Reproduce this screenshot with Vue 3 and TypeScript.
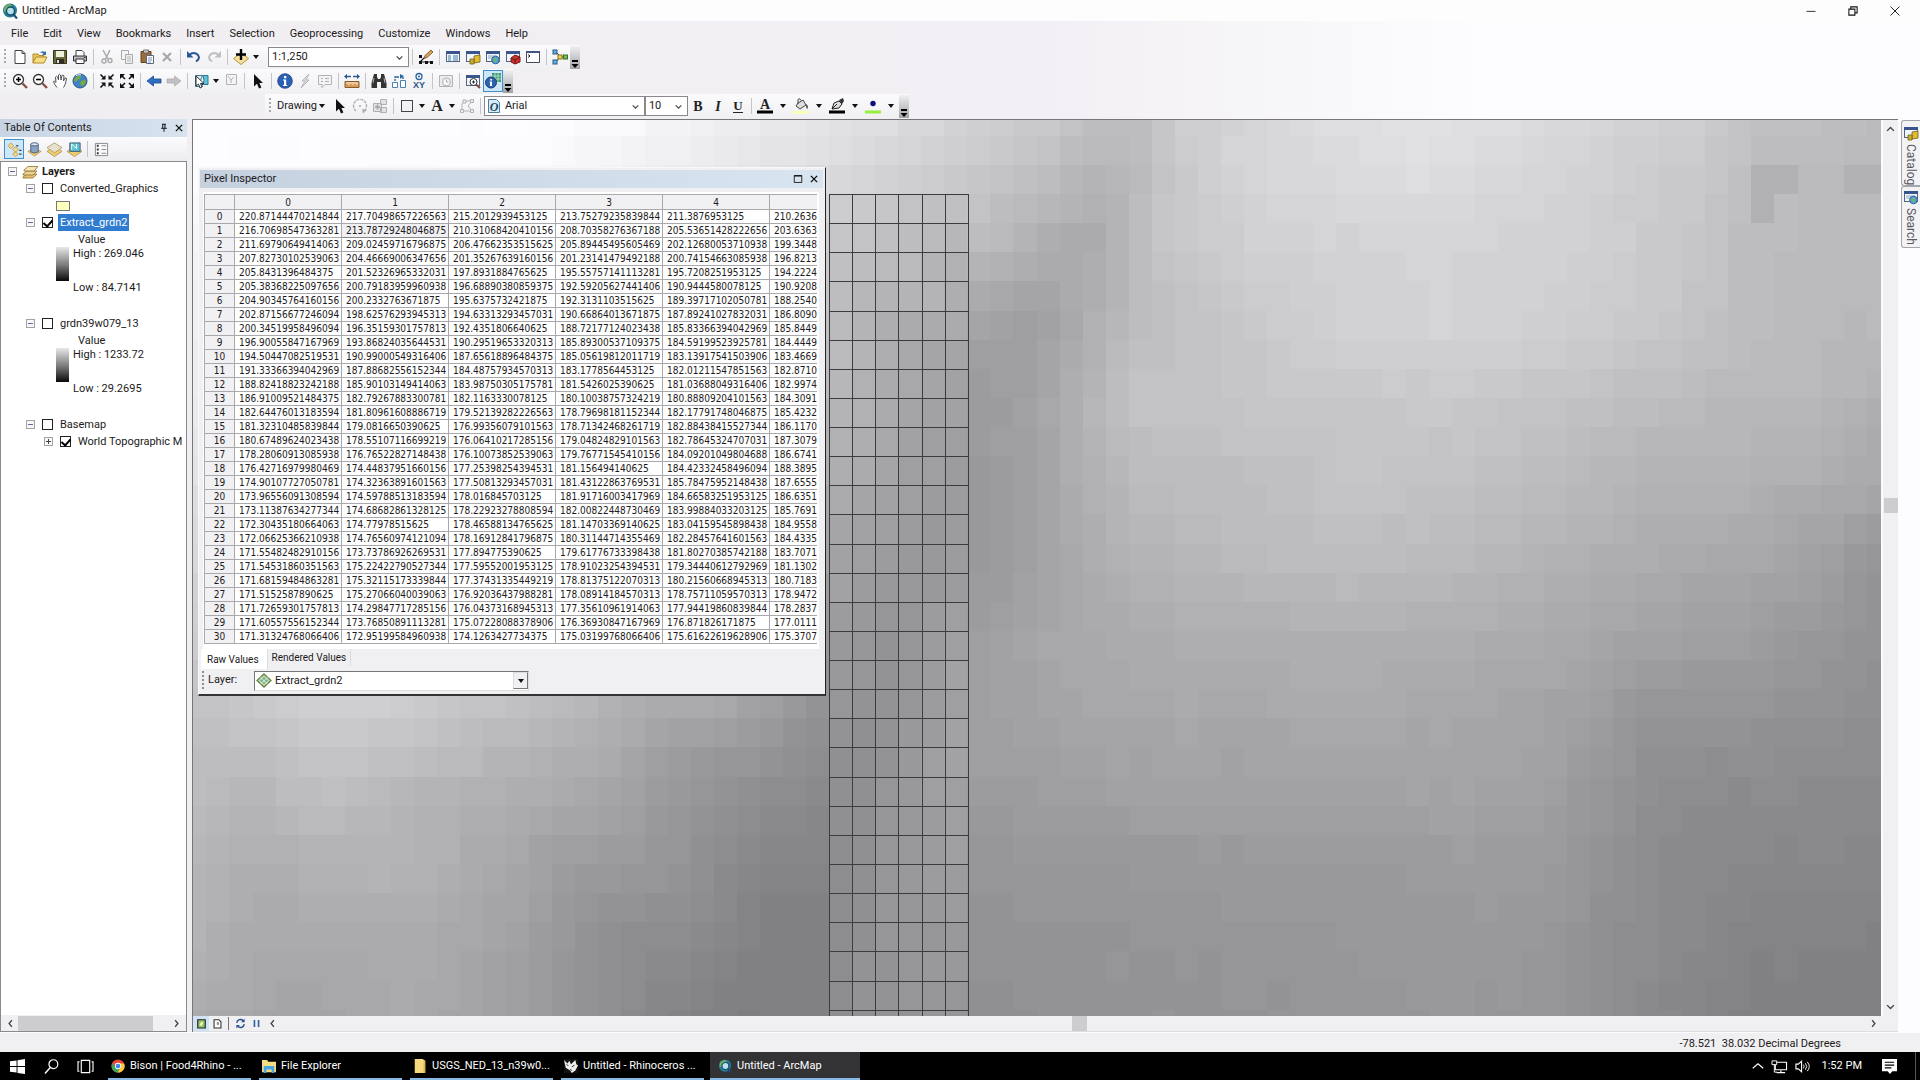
<script setup lang="ts">
import { ref } from 'vue'

type Item =
  | { kind: 'btn'; icon: string; label: string; active?: boolean }
  | { kind: 'sep' }
  | { kind: 'caret'; label: string; wide?: boolean }

const btn = (icon: string, label: string, active = false): Item => ({ kind: 'btn', icon, label, active })
const sep: Item = { kind: 'sep' }
const caret = (label: string, wide = false): Item => ({ kind: 'caret', label, wide })

const menus = ['File', 'Edit', 'View', 'Bookmarks', 'Insert', 'Selection', 'Geoprocessing', 'Customize', 'Windows', 'Help']

const standardLeft: Item[] = [
  btn('new', 'New'), btn('open', 'Open'), btn('save', 'Save'), btn('print', 'Print'), sep,
  btn('cut', 'Cut'), btn('copy', 'Copy'), btn('paste', 'Paste'), btn('del', 'Delete'), sep,
  btn('undo', 'Undo'), btn('redo', 'Redo'), sep,
  btn('add', 'Add data'), caret('Add data options'),
]
const standardRight: Item[] = [
  sep, btn('editor', 'Editor toolbar'), sep,
  btn('winToc', 'Table of contents'), btn('winCat', 'Catalog window'), btn('winSearch', 'Search window'),
  btn('winBox', 'ArcToolbox'), btn('winPy', 'Python window'), sep, btn('model', 'ModelBuilder'),
]
const tools: Item[] = [
  btn('zoomIn', 'Zoom in'), btn('zoomOut', 'Zoom out'), btn('pan', 'Pan'), btn('globe', 'Full extent'), sep,
  btn('fixIn', 'Fixed zoom in'), btn('fixOut', 'Fixed zoom out'), sep,
  btn('back', 'Previous extent'), btn('fwd', 'Next extent'), sep,
  btn('select', 'Select features'), caret('Select options'), btn('clear', 'Clear selection'), sep,
  btn('arrow', 'Select elements'), sep,
  btn('info', 'Identify'), btn('bolt', 'Hyperlink'), btn('html', 'HTML popup'), sep,
  btn('measure', 'Measure'), sep,
  btn('find', 'Find'), btn('route', 'Find route'), btn('xy', 'Go to XY'), sep,
  btn('time', 'Time slider'), sep,
  btn('viewer', 'Viewer window'), btn('pixel', 'Pixel inspector', true),
]
const drawLeft: Item[] = [
  btn('arrow', 'Select elements'), btn('rotate', 'Rotate'), btn('group', 'Group'), sep,
  btn('rect', 'Rectangle'), caret('Shapes'), btn('textA', 'Text'), caret('Text options'), btn('verts', 'Edit vertices'), sep,
]
const drawRight: Item[] = [
  btn('bold', 'Bold'), btn('italic', 'Italic'), btn('under', 'Underline'), sep,
  btn('fontCol', 'Font colour'), caret('Font colours', true),
  btn('fill', 'Fill colour'), caret('Fill colours', true),
  btn('pen', 'Line colour'), caret('Line colours', true),
  btn('dot', 'Marker colour'), caret('Marker colours', true),
]

const win = (inner: string) =>
  `<rect x="1.5" y="2.5" width="13" height="10" fill="#f2f6fa" stroke="#55647d"/><path d="M1 2h14v3H1z" fill="#39558c"/>${inner}`
const ser = 'font-family="Liberation Serif, serif" font-weight="bold"'

const icons: Record<string, string> = {
  new: '<path d="M3 1.500h7l3 3v10H3z" fill="#fff" stroke="#444"/><path d="M10 1.500v3h3" fill="none" stroke="#444"/>',
  open: '<path d="M1 14V5h5l1 1.500h5V9" fill="#e8c860" stroke="#b08a24"/><path d="M1 14l3-6h11l-3 6z" fill="#f7dd83" stroke="#b08a24"/><path d="M8 4q2-3 5-1l1-1v4h-4l1.500-1.500q-1.500-1-3-.5z" fill="#2f6fb0"/>',
  save: '<path d="M1.500 1.500h13v13h-13z" fill="#6d6a3c" stroke="#34331e"/><path d="M4 2h8v6H4z" fill="#f1f0da"/><path d="M4 10h8v4.500H4z" fill="#2e2d23"/><path d="M5 11h2v3H5z" fill="#ddd"/>',
  print: '<path d="M4 7V1.500h6l2 2V7" fill="#fff" stroke="#444"/><path d="M1.500 7h13v5h-13z" fill="#bbb9b9" stroke="#333"/><path d="M4 10h8v4.500H4z" fill="#fff" stroke="#333"/><path d="M12 8.500h1.500" stroke="#222"/>',
  cut: '<path d="M4 1l5 9M11 1L6.500 10" stroke="#aaa" stroke-width="1.500" fill="none"/><circle cx="5" cy="12" r="2" fill="none" stroke="#aaa" stroke-width="1.400"/><circle cx="11" cy="11.500" r="2" fill="none" stroke="#aaa" stroke-width="1.400"/>',
  copy: '<path d="M2.500 1.500h7v9h-7z" fill="#f4f4f4" stroke="#aaa"/><path d="M6.500 5.500h7v9h-7z" fill="#eee" stroke="#aaa"/><path d="M8 8h4M8 10h4M8 12h4" stroke="#bbb"/>',
  paste: '<path d="M2 2.500h10v11H2z" fill="#9a6e3a" stroke="#60421e"/><path d="M4.500 1h5v3h-5z" fill="#c9c9c9" stroke="#555" stroke-width=".8"/><path d="M7.500 6.500h7v8h-7z" fill="#fff" stroke="#5b6b82"/><path d="M9 9h4M9 11h4M9 13h3" stroke="#7b93b8"/>',
  del: '<path d="M4 4l8 8M12 4l-8 8" stroke="#a9a7a9" stroke-width="2.200"/>',
  undo: '<path d="M3 6q5-4 9 0 2.500 3.500-2 6.500" fill="none" stroke="#2b5797" stroke-width="2"/><path d="M1 2v6.500h6.500z" fill="#2b5797"/>',
  redo: '<path d="M13 6q-5-4-9 0-2.500 3.500 2 6.500" fill="none" stroke="#c0bfc2" stroke-width="2"/><path d="M15 2v6.500H8.500z" fill="#c0bfc2"/>',
  add: '<path d="M8 4l7.500 5.500L8 15.500.5 9.500z" fill="#f8e09a" stroke="#b2964a"/><path d="M8 0v11M3 5.500h10" stroke="#000" stroke-width="2.400"/>',
  editor: '<path d="M2 13h11M2 13l4-4" stroke="#222" stroke-width="1.200"/><path d="M1 12h3v3H1zM7 12h3v3H7zM12 12h3v3h-3zM1 6h3v3H1z" fill="#111"/><path d="M6 9.500l1-3L13 1l2 2-6 5.500z" fill="#d9a45b" stroke="#6b4721" stroke-width=".8"/>',
  winToc: win('<path d="M3 7h3M3 9h3M3 11h3M8 7h5M8 9h5M8 11h5" stroke="#467cae"/>'),
  winCat: win('<path d="M9 7l6-1v7l-6 1z" fill="#e0bd32" stroke="#71601a" stroke-width=".8"/><path d="M5 10h4v5H5z" fill="#c8ae2c" stroke="#71601a" stroke-width=".8"/>'),
  winSearch: win('<path d="M3 7h9M3 9h5" stroke="#8aa8c8"/><circle cx="10.500" cy="11" r="3.800" fill="#5ca2cf" stroke="#30659b"/><path d="M8.500 10q2-2 3 0t-1 3q-2-1-2-3z" fill="#6fba55"/>'),
  winBox: win('<path d="M6 9l4-3 5 2v5l-5 2-4-2z" fill="#c8322f" stroke="#7b1918"/><path d="M6 9l4 2 5-3M10 11v4" stroke="#701414" fill="none"/>'),
  winPy: '<path d="M1.500 2.500h13v11h-13z" fill="#fff" stroke="#444c5c"/><path d="M1 2h14v2H1z" fill="#3d5580"/><path d="M3 5.500l2 1.500-2 1.500" stroke="#222" fill="none"/>',
  model: '<path d="M4 3l4 4M4 13l4-5M8 8h5" stroke="#333"/><rect x="1" y="1" width="4" height="4" fill="#68b0e0" stroke="#235b8c"/><rect x="1" y="11" width="4" height="4" fill="#68b0e0" stroke="#235b8c"/><rect x="6" y="6" width="4" height="4" fill="#f3d04f" stroke="#8a741e"/><rect x="11.500" y="6" width="4" height="4" fill="#77c055" stroke="#33702a"/>',
  zoomIn: '<circle cx="6.500" cy="6.500" r="5" fill="#fff" stroke="#333" stroke-width="1.300"/><path d="M4 6.500h5M6.500 4v5" stroke="#000" stroke-width="1.600"/><path d="M10.500 10.500L15 15" stroke="#8b4f45" stroke-width="2.400"/>',
  zoomOut: '<circle cx="6.500" cy="6.500" r="5" fill="#fff" stroke="#333" stroke-width="1.300"/><path d="M4 6.500h5" stroke="#000" stroke-width="1.600"/><path d="M10.500 10.500L15 15" stroke="#8b4f45" stroke-width="2.400"/>',
  pan: '<path d="M5 14.500Q2 11 1.500 8.500q1-1 2.500 1L3.500 4q1.200-1.500 2 0L6.500 7V2q1.200-1.500 2 0L9 7l1-4.500q1.300-1 2 .5L11.500 8l1.500-3q1.500-.5 1.500 1-1 6-3 8.500" fill="#fff" stroke="#555"/>',
  globe: '<circle cx="8" cy="8" r="7" fill="#3f83c4" stroke="#2a5884"/><path d="M4 4q4-3 5 0-1 2-3 3-2 3-4 1 0-2 2-4zM9 8q4-2 5 0-1 5-4 5-3-2-1-5z" fill="#74a944"/><path d="M4 2.500Q7 1 9 2" stroke="#e9f3fb" fill="none"/>',
  fixIn: '<path d="M1.500 1.500l4 4M14.500 1.500l-4 4M1.500 14.500l4-4M14.500 14.500l-4-4" stroke="#111" stroke-width="1.600"/><path d="M6.500 2v4.500H2zM9.500 2v4.500H14zM6.500 14V9.500H2zM9.500 14V9.500H14z" fill="#111"/>',
  fixOut: '<path d="M2 2l4 4M14 2l-4 4M2 14l4-4M14 14l-4-4" stroke="#111" stroke-width="1.600"/><path d="M1 1h5L1 6zM15 1h-5l5 5zM1 15h5l-5-5zM15 15h-5l5-5z" fill="#111"/>',
  back: '<path d="M1 8l6.500-5v3H15v4H7.500v3z" fill="#2f6ec4" stroke="#1d4988" stroke-width=".8"/>',
  fwd: '<path d="M15 8L8.500 3v3H1v4h7.500v3z" fill="#c0bfc3" stroke="#aeadb1" stroke-width=".8"/>',
  select: '<path d="M2.500 2.500h7l-2 5 2 6h-7z" fill="#d7eef5" stroke="#42788c"/><path d="M10 2.500h5v9h-6l2-4z" fill="#5bc5dd" stroke="#327489"/><path d="M3 3v10l2.500-2 1.500 4 2-1-1.500-3.500H11z" fill="#fff" stroke="#222" stroke-width=".9"/>',
  clear: '<path d="M3.500 1.500h10v10h-10z" fill="#f4f3f5" stroke="#b4b2b6"/><path d="M5 3l3 4 3-3M8 7v3" stroke="#b4b2b6" fill="none"/>',
  arrow: '<path d="M4 1v12.500l3-2.800 2 4.800 2.400-1-2-4.500H13z" fill="#111"/>',
  info: '<circle cx="8" cy="8" r="7.300" fill="#2961b5" stroke="#1b3f78" stroke-width=".8"/><path d="M7 3h2.300v2.200H7zM6 6.500h3.200V12h1v1H6v-1h1V7.500H6z" fill="#fff"/>',
  bolt: '<path d="M12 1L5 8h3l-4 7 8-8H9z" fill="#dcdbde" stroke="#b7b5b9"/>',
  html: '<path d="M1.500 2.500h13v9H8l-3 3v-3H1.500z" fill="#f3f2f4" stroke="#b3b1b5"/><path d="M4 5.500h2M8 5.500h4M4 8.500h2M8 8.500h4" stroke="#b3b1b5"/>',
  measure: '<path d="M1 8.500h14v6H1z" fill="#d99b5b" stroke="#8a5a29"/><path d="M3 9v2M5 9v3M7 9v2M9 9v3M11 9v2M13 9v3" stroke="#fff3df"/><path d="M1 3.500h6M9 3.500h6" stroke="#2c5d8f" stroke-width="1.400"/><path d="M0 3.500L3 1v5zM16 3.500L13 1v5z" fill="#2c5d8f"/>',
  find: '<path d="M3 1h3v3l1 2h2l1-2V1h3l2.500 9v5H10V9H6v6H.5v-5z" fill="#333"/><path d="M3 5L2 10M13 5l1 5" stroke="#aaa"/>',
  route: '<path d="M1.500 9.500h5v5h-5zM9.500 7.500h5v7h-5z" fill="#fff" stroke="#4f7fae"/><path d="M4 8V4h8v3M4 4h3" stroke="#2c6ba2" stroke-width="1.400" fill="none" stroke-dasharray="2 1"/><path d="M9 1l4 2-4 3z" fill="#2c6ba2"/>',
  xy: '<circle cx="8" cy="3.500" r="3" fill="none" stroke="#2b639b" stroke-width="1.300"/><circle cx="8" cy="3.500" r="1" fill="#2b639b"/><text x="8" y="15" font-size="9" font-weight="bold" text-anchor="middle" fill="#2b5288" font-family="Liberation Sans, sans-serif">XY</text>',
  time: '<path d="M1.500 2.500h13v11h-13z" fill="#ececee" stroke="#b5b3b7"/><circle cx="8.500" cy="9" r="4" fill="#f8f8f8" stroke="#adabb0"/><path d="M8.500 6.500V9h2" stroke="#adabb0" fill="none"/>',
  viewer: win('<circle cx="8.500" cy="9" r="3.500" fill="#fff" stroke="#333"/><path d="M7 9h3M8.500 7.500v3" stroke="#222"/><path d="M11 11.500l4 3.500" stroke="#7b4a41" stroke-width="2"/>'),
  pixel: '<path d="M7 0h9v9H7z" fill="#3c9c72"/><path d="M10 0v9M13 0v9M7 3h9M7 6h9" stroke="#d4efe2" stroke-width=".7"/><circle cx="6" cy="9.500" r="5.500" fill="#2d62ae" stroke="#1c4176"/><path d="M5.200 6h1.800v1.600H5.200zM4.700 8.500H7V13H5V9.400h-.3z" fill="#fff"/>',
  rotate: '<path d="M4 13A6.500 6.500 0 1 1 12 13" fill="none" stroke="#b0aeb2" stroke-width="1.400" stroke-dasharray="3 1"/><path d="M10 11l5 1-4 3.500z" fill="#b0aeb2"/><circle cx="8" cy="8" r="1" fill="#aaa"/>',
  group: '<path d="M1.500 5.500h8v8h-8zM8.500 1.500h6v5h-6zM8.500 9.500h6v5h-6z" fill="#e2e1e4" stroke="#b1afb3"/><path d="M3 9h5M5.500 6.500v5" stroke="#a3a1a6" stroke-width="1.500"/>',
  rect: '<rect x="2.500" y="2.500" width="11" height="11" fill="#f2f1f5" stroke="#444"/>',
  textA: `<text x="8" y="13" font-size="16" text-anchor="middle" fill="#222" ${ser}>A</text>`,
  verts: '<path d="M3 13V6l3-3h7L9 8l4 5z" fill="none" stroke="#b3b1b5"/><path d="M1.500 11.500h3v3h-3zM11.500 11.500h3v3h-3zM11.500 1.500h3v3h-3zM4 2h3v3H4z" fill="#eee" stroke="#b3b1b5"/>',
  bold: `<text x="8" y="13" font-size="14" text-anchor="middle" fill="#222" ${ser}>B</text>`,
  italic: `<text x="8" y="13" font-size="14" text-anchor="middle" fill="#222" font-style="italic" ${ser}>I</text>`,
  under: `<text x="8" y="12" font-size="13" text-anchor="middle" fill="#222" ${ser}>U</text><path d="M3 14.500h10" stroke="#222"/>`,
  fontCol: `<text x="8" y="11" font-size="14" text-anchor="middle" fill="#222" ${ser}>A</text><path d="M0 12.500h16v3H0z" fill="#000"/>`,
  fill: '<path d="M5 5l5-3 3 5-6 4-4-3z" fill="#ddd" stroke="#444"/><path d="M5 6V1.500q2-2 3 1" fill="none" stroke="#444"/><path d="M13 6q3 2 1.500 5-2-1-1.500-5z" fill="#555"/><path d="M0 13h16v2.500H0z" fill="#ffffb4"/>',
  pen: '<path d="M3 11l2-6 5-2 3 3-3 4z" fill="#ddd" stroke="#222"/><path d="M10 2l4-2 1 3-2 3z" fill="#333"/><path d="M3 11l5-5" stroke="#222"/><path d="M0 12.500h16v3H0z" fill="#000"/>',
  dot: '<circle cx="8" cy="5.500" r="2.700" fill="#0a1080"/><path d="M0 12.500h16v3H0z" fill="#92f13c"/>',
  more: '<path d="M2 1h6v2H2z" fill="#000"/><path d="M1.500 5h7L5 9z" fill="#000"/>',
  arc: '<circle cx="8" cy="7.500" r="7" fill="#257c94"/><path d="M3 3q5-4 7 0-1 2-4 2-1 4-4 4-1-3 1-6z" fill="#6fae62"/><circle cx="8.500" cy="8" r="4" fill="#b9e0e8" stroke="#184e73" stroke-width="1.400"/><path d="M11 11l4 4.500" stroke="#184e73" stroke-width="2"/>',
  font: '<path d="M2.500 1.500h8l3 3v10h-11z" fill="#d8eaf5" stroke="#4e7d9c"/><text x="8" y="12.500" font-size="12" font-style="italic" font-weight="bold" text-anchor="middle" fill="#1b4c63" font-family="Liberation Serif, serif">O</text>',
  byOrder: '<path d="M1 4l3-3 3 3-3 3zM6 8l3-3 3 3-3 3zM6 13l3-2.500 3 2.500-3 2.500z" fill="#f4d98c" stroke="#b29245" stroke-width=".8"/><path d="M10 4h2M13 9h2.500M13 13h2.500" stroke="#345" stroke-width="1.400"/>',
  bySource: '<path d="M1 10l7-3 7 3-7 5z" fill="#efcd6d" stroke="#ad8f41" stroke-width=".8"/><path d="M4 2.500v8q4 2.500 8 0v-8z" fill="#8aa3c4" stroke="#495e7e"/><ellipse cx="8" cy="2.500" rx="4" ry="1.700" fill="#dce6f2" stroke="#495e7e"/>',
  byVis: '<path d="M0 10l8-5 8 5-8 5.500z" fill="#efcd6d" stroke="#a98c45" stroke-width=".8"/><path d="M0 6l8-5 8 5-8 5.500z" fill="#e7e1d0" stroke="#a98c45" stroke-width=".8"/>',
  bySel: '<path d="M0 10l8-4 8 4-8 5.500z" fill="#efcd6d" stroke="#a98c45" stroke-width=".8"/><path d="M3 1h11v9H3z" fill="#5fc0d2" stroke="#3c5a74"/><path d="M5 2l5 5M10 2v5M5 2v6" stroke="#fff"/>',
  opts: '<path d="M1.500 1.500h13v13h-13z" fill="#f8f8fa" stroke="#888"/><path d="M3 4h2M3 8h2M3 12h2" stroke="#333" stroke-width="2"/><path d="M8 4h5M8 8h5M8 12h5" stroke="#888"/>',
  layers: '<path d="M1 13l4-3h10l-4 4H1z" fill="#e7c170" stroke="#8d6f35" stroke-width=".8"/><path d="M1 10l4-3h10l-4 4H1z" fill="#f0d291" stroke="#8d6f35" stroke-width=".8"/><path d="M2 6l4-3.500h10L12 7H2z" fill="#f7e3b4" stroke="#8d6f35" stroke-width=".8"/>',
  raster: '<path d="M8 1l7 6.500L8 14 1 7.500z" fill="#c7dba9" stroke="#63824c" stroke-width="1.300"/><path d="M8 4l4 3.500L8 11 4 7.500z" fill="#6fae9b"/><path d="M4.500 4.500l7 6.500M11.500 4.500l-7 6.500" stroke="#e6efd7"/>',
  pin: '<path d="M5 2h6M6 2v6M9.500 2v6M3.500 8.500h9M8 9v5" stroke="#111" stroke-width="1.600" fill="none"/>',
  cross: '<path d="M3 3l10 10M13 3L3 13" stroke="#111" stroke-width="2.200"/>',
  maxi: '<path d="M2 2.500h12v11H2z" fill="none" stroke="#111" stroke-width="1.400"/><path d="M2 3h12" stroke="#111" stroke-width="2"/>',
  chevL: '<path d="M10 3L6 8l4 5" fill="none" stroke="#444" stroke-width="2"/>',
  chevR: '<path d="M6 3l4 5-4 5" fill="none" stroke="#444" stroke-width="2"/>',
  chevU: '<path d="M3 10l5-5 5 5" fill="none" stroke="#444" stroke-width="2"/>',
  chevD: '<path d="M3 6l5 5 5-5" fill="none" stroke="#444" stroke-width="2"/>',
  dataView: '<path d="M2.500 2.500h11v12h-11z" fill="#8fc46c" stroke="#222" stroke-width="1.600"/><path d="M5 10l3-5 3 2-3 5z" fill="#f5f2b2"/>',
  pageView: '<path d="M3 2.500h7l3 3v9H3z" fill="#fff" stroke="#333" stroke-width="1.600"/><path d="M7 6h3v4H7z" fill="#888"/>',
  refresh: '<path d="M2.500 7A5.500 5.500 0 0 1 12 4M13.500 9A5.500 5.500 0 0 1 4 12" fill="none" stroke="#24508b" stroke-width="2"/><path d="M14 1v5H9zM2 15v-5h5z" fill="#24508b"/>',
  pause: '<path d="M5 3v10M11 3v10" stroke="#2f61a5" stroke-width="2.400"/>',
  windows: '<path d="M0 2.500l7-1V7.500H0zM8 1.300L16 0v7.500H8zM0 8.500h7v6l-7-1zM8 8.500h8V16l-8-1.200z" fill="#fff"/>',
  magnify: '<circle cx="10" cy="5.500" r="4.700" fill="none" stroke="#fff" stroke-width="1.300"/><path d="M6.700 9L1 15.500" stroke="#fff" stroke-width="1.500"/>',
  taskView: '<path d="M3.500 1.500h9v13h-9z" fill="none" stroke="#fff" stroke-width="1.200"/><path d="M1.500 3H0v10h1.500M14.500 3H16v10h-1.500" fill="none" stroke="#fff" stroke-width="1.200"/>',
  chrome: '<circle cx="8" cy="8" r="7.500" fill="#e9453a"/><path d="M1.500 4.500A7.500 7.500 0 0 0 7.500 15.500L11 9.500 5 9z" fill="#3ba55a"/><path d="M8 5h7A7.500 7.500 0 0 1 7.500 15.500L11.500 9z" fill="#fbce3a"/><circle cx="8" cy="8" r="3.600" fill="#fff"/><circle cx="8" cy="8" r="2.700" fill="#4584ee"/>',
  explorer: '<path d="M0 1h6l1 2h9v12H0z" fill="#f7dc83"/><path d="M2 8h12v8h-3v-4H5v4H2z" fill="#4ba5de"/>',
  folder: '<path d="M2 0h9l3 2v14H2z" fill="#f5d97c"/><path d="M12 3h2v13h-2z" fill="#dcb44b"/>',
  rhino: '<rect width="16" height="16" fill="#111"/><path d="M0 1l4 4 2-3 2 4 5-5 1 5 2 1-3 6-4 3-2-3-5-3z" fill="#eee"/><path d="M3 6l2 2M9 9l3-2M7 12l2 1" stroke="#111"/>',
  up: '<path d="M1 11l7-6 7 6" fill="none" stroke="#fff" stroke-width="1.500"/>',
  net: '<path d="M3.500 3.500h12v8h-12z" fill="none" stroke="#fff" stroke-width="1.200"/><path d="M5 14.500h9M9.500 12v2" stroke="#fff" stroke-width="1.200"/><path d="M0 2h5v4H0z" fill="#000" stroke="#fff"/><path d="M2.500 6v8h3" fill="none" stroke="#fff"/>',
  vol: '<path d="M1 5.500h2.500L7 2.500v11l-3.500-3H1z" fill="none" stroke="#fff" stroke-width="1.200"/><path d="M9 6q1.500 2 0 4M11 4.500q3 3.500 0 7M13 3q4.500 5 0 10" fill="none" stroke="#fff"/>',
  note: '<path d="M0 0h16v13h-5l-2.500 3L6 13H0z" fill="#fff"/><path d="M3 3.500h10M3 6.500h10M3 9.500h7" stroke="#000" stroke-width="1.200"/>',
  minimize: '<path d="M2 8.500h12" stroke="#222" stroke-width="1.200"/>',
  restore: '<path d="M2.500 5.500h8v8h-8zM5 5V2.500h8.500v8H11" fill="none" stroke="#111" stroke-width="1.400"/>',
  close: '<path d="M2 2l12 12M14 2L2 14" stroke="#222" stroke-width="1.300"/>',
}

const columns = [0, 1, 2, 3, 4]
const rows: string[][] = `220.87144470214844 217.70498657226563 215.2012939453125 213.75279235839844 211.3876953125 210.26361
216.70698547363281 213.78729248046875 210.31068420410156 208.70358276367188 205.53651428222656 203.63631
211.69790649414063 209.02459716796875 206.47662353515625 205.89445495605469 202.12680053710938 199.34480
207.82730102539063 204.46669006347656 201.35267639160156 201.23141479492188 200.74154663085938 196.82138
205.8431396484375 201.52326965332031 197.8931884765625 195.55757141113281 195.7208251953125 194.22245
205.38368225097656 200.79183959960938 196.68890380859375 192.59205627441406 190.9444580078125 190.92086
204.90345764160156 200.2332763671875 195.6375732421875 192.3131103515625 189.39717102050781 188.25405
202.87156677246094 198.62576293945313 194.63313293457031 190.66864013671875 187.89241027832031 186.80901
200.34519958496094 196.35159301757813 192.4351806640625 188.72177124023438 185.83366394042969 185.84490
196.90055847167969 193.86824035644531 190.29519653320313 185.89300537109375 184.59199523925781 184.44490
194.50447082519531 190.99000549316406 187.65618896484375 185.05619812011719 183.13917541503906 183.46696
191.33366394042969 187.88682556152344 184.48757934570313 183.1778564453125 182.01211547851563 182.87104
188.82418823242188 185.90103149414063 183.98750305175781 181.5426025390625 181.03688049316406 182.99742
186.91009521484375 182.79267883300781 182.1163330078125 180.10038757324219 180.88809204101563 184.30914
182.64476013183594 181.80961608886719 179.52139282226563 178.79698181152344 182.17791748046875 185.42321
181.32310485839844 179.0816650390625 176.99356079101563 178.71342468261719 182.88438415527344 186.11705
180.67489624023438 178.55107116699219 176.06410217285156 179.04824829101563 182.78645324707031 187.30790
178.28060913085938 176.76522827148438 176.10073852539063 179.76771545410156 184.09201049804688 186.67416
176.42716979980469 174.44837951660156 177.25398254394531 181.156494140625 184.42332458496094 188.3895
174.90107727050781 174.32363891601563 177.50813293457031 181.43122863769531 185.78475952148438 187.65553
173.96556091308594 174.59788513183594 178.016845703125 181.91716003417969 184.66583251953125 186.63513
173.11387634277344 174.68682861328125 178.22923278808594 182.00822448730469 183.99884033203125 185.76918
172.30435180664063 174.77978515625 178.46588134765625 181.14703369140625 183.04159545898438 184.95587
172.06625366210938 174.76560974121094 178.16912841796875 180.31144714355469 182.28457641601563 184.43359
171.55482482910156 173.73786926269531 177.894775390625 179.61776733398438 181.80270385742188 183.70716
171.54531860351563 175.22422790527344 177.59552001953125 178.91023254394531 179.34440612792969 181.13021
171.68159484863281 175.32115173339844 177.37431335449219 178.81375122070313 180.21560668945313 180.71832
171.5152587890625 175.27066040039063 176.92036437988281 178.08914184570313 178.75711059570313 178.94721
171.72659301757813 174.29847717285156 176.04373168945313 177.35610961914063 177.94419860839844 178.28372
171.60557556152344 173.76850891113281 175.07228088378906 176.36930847167969 176.871826171875 177.01115
171.31324768066406 172.95199584960938 174.1263427734375 175.03199768066406 175.61622619628906 175.37074`
  .split('\n')
  .map((line) => line.trim().split(' '))

// Shade samples of the elevation surface: [y, [x, grey], ...] in map units.
type Band = [number, [number, number][]]
const bands: Band[] = [
  [4, [[0, 255], [340, 253], [440, 247], [520, 240], [620, 228], [700, 220], [780, 208], [870, 198], [910, 188], [950, 188], [980, 204], [1060, 214], [1160, 223], [1230, 225], [1310, 222], [1410, 212], [1510, 205], [1560, 192], [1689, 188]]],
  [60, [[0, 252], [340, 250], [440, 240], [520, 232], [620, 220], [700, 210], [780, 200], [870, 185], [910, 178], [950, 188], [980, 200], [1060, 214], [1160, 218], [1230, 221], [1310, 216], [1410, 208], [1510, 200], [1560, 187], [1689, 185]]],
  [120, [[0, 245], [560, 214], [630, 205], [780, 190], [870, 172], [910, 172], [950, 190], [980, 199], [1060, 208], [1160, 212], [1310, 212], [1410, 208], [1510, 196], [1560, 188], [1689, 186]]],
  [210, [[0, 240], [560, 200], [640, 190], [780, 162], [840, 157], [870, 166], [910, 178], [950, 190], [1060, 200], [1160, 209], [1260, 212], [1360, 206], [1460, 200], [1510, 195], [1560, 188], [1689, 184]]],
  [285, [[0, 235], [640, 180], [780, 155], [840, 162], [870, 172], [910, 186], [950, 195], [1060, 197], [1160, 199], [1260, 200], [1360, 195], [1460, 188], [1560, 184], [1610, 186], [1689, 176]]],
  [360, [[0, 226], [640, 170], [780, 153], [840, 160], [870, 170], [910, 180], [950, 188], [1060, 190], [1160, 197], [1260, 194], [1360, 188], [1460, 178], [1560, 178], [1689, 168]]],
  [440, [[0, 216], [640, 160], [780, 153], [840, 160], [870, 168], [910, 174], [950, 180], [1060, 187], [1160, 189], [1260, 186], [1360, 178], [1460, 172], [1560, 168], [1640, 158], [1689, 148]]],
  [520, [[0, 204], [640, 148], [780, 157], [840, 166], [910, 170], [1060, 174], [1160, 176], [1260, 174], [1360, 170], [1460, 162], [1560, 158], [1640, 150], [1689, 146]]],
  [580, [[0, 195], [60, 200], [110, 207], [190, 206], [260, 199], [310, 193], [360, 188], [410, 178], [460, 173], [510, 171], [560, 164], [610, 150], [640, 142], [780, 159], [910, 168], [1060, 170], [1160, 171], [1260, 168], [1360, 164], [1430, 155], [1460, 150], [1560, 150], [1689, 144]]],
  [632, [[0, 190], [60, 190], [110, 197], [160, 199], [260, 188], [310, 183], [410, 174], [460, 161], [510, 155], [590, 147], [640, 140], [780, 158], [910, 164], [1160, 165], [1260, 166], [1360, 162], [1430, 149], [1460, 144], [1560, 143], [1689, 140]]],
  [682, [[0, 188], [60, 180], [130, 190], [210, 180], [310, 174], [410, 165], [470, 155], [510, 147], [590, 138], [640, 136], [780, 155], [910, 160], [1160, 161], [1260, 163], [1360, 159], [1430, 147], [1460, 141], [1560, 139], [1689, 137]]],
  [742, [[0, 182], [70, 174], [110, 178], [210, 180], [260, 174], [310, 168], [370, 158], [430, 154], [510, 145], [560, 134], [640, 132], [780, 150], [910, 152], [1060, 154], [1260, 156], [1360, 155], [1410, 147], [1460, 140], [1560, 136], [1689, 136]]],
  [812, [[0, 180], [60, 170], [110, 170], [210, 173], [260, 168], [330, 162], [380, 150], [430, 143], [510, 140], [560, 130], [610, 127], [640, 130], [780, 148], [910, 148], [1060, 150], [1260, 154], [1360, 152], [1410, 144], [1460, 140], [1560, 132], [1689, 131]]],
  [890, [[0, 171], [60, 168], [110, 164], [210, 170], [270, 166], [330, 158], [380, 148], [430, 142], [460, 134], [550, 127], [640, 130], [780, 144], [910, 148], [1060, 148], [1260, 152], [1360, 150], [1410, 144], [1460, 138], [1560, 128], [1689, 128]]],
]

// Small hollows that stand out from their surroundings, by "column,row".
const hollows = new Set(['40,-1', '40,0', '41,-1', '44,-1', '45,-1'])

const MAP_W = 1688
const MAP_H = 896
const CELL_W = 23.06
const CELL_H = 29.13
const GRID_X = 636
const GRID_Y = 74

function along(points: [number, number][], x: number): number {
  if (x <= points[0][0]) return points[0][1]
  for (let i = 1; i < points.length; i++) {
    const [x1, v1] = points[i]
    if (x <= x1) {
      const [x0, v0] = points[i - 1]
      return v0 + ((x - x0) / (x1 - x0)) * (v1 - v0)
    }
  }
  return points[points.length - 1][1]
}

function shade(x: number, y: number): number {
  if (y <= bands[0][0]) return along(bands[0][1], x)
  for (let i = 1; i < bands.length; i++) {
    if (y <= bands[i][0]) {
      const t = (y - bands[i - 1][0]) / (bands[i][0] - bands[i - 1][0])
      return along(bands[i - 1][1], x) * (1 - t) + along(bands[i][1], x) * t
    }
  }
  return along(bands[bands.length - 1][1], x)
}

function jitter(c: number, r: number): number {
  const n = Math.sin(c * 12.9898 + r * 78.233) * 43758.5453
  return (n - Math.floor(n) - 0.5) * 1.5
}

const cells: { x: number; y: number; w: number; h: number; fill: string }[] = []
for (let r = -3; r <= 28; r++) {
  const y0 = Math.round(GRID_Y + r * CELL_H)
  const y1 = Math.round(GRID_Y + (r + 1) * CELL_H)
  for (let c = -28; c <= 45; c++) {
    const x0 = Math.round(GRID_X + c * CELL_W)
    const x1 = Math.round(GRID_X + (c + 1) * CELL_W)
    let g: number
    if (c >= 0 && c < 6 && r >= 0) g = 140 + (Number(rows[r][c]) - 171) * 1.3
    else g = shade((x0 + x1) / 2, (y0 + y1) / 2) + jitter(c, r)
    if (hollows.has(`${c},${r}`)) g -= 9
    g = Math.min(253, Math.round(g / 3) * 3)
    cells.push({ x: x0, y: y0, w: x1 - x0, h: y1 - y0, fill: `rgb(${g},${g - 1},${g + 2})` })
  }
}

let fishnet = ''
for (let c = 0; c <= 6; c++) fishnet += `M${Math.round(GRID_X + c * 23.15)} ${GRID_Y}V${MAP_H}`
for (let r = 0; r <= 28; r++) fishnet += `M${GRID_X} ${Math.round(GRID_Y + r * CELL_H)}H${GRID_X + 139}`

const scale = ref('1:1,250')
const fontName = ref('Arial')
const fontSize = ref('10')
const layer = ref('Extract_grdn2')
const shown = ref({ converted: false, extract: true, grdn: false, basemap: false, topo: true })

const tasks = [
  { icon: 'chrome', text: 'Bison | Food4Rhino - ...' },
  { icon: 'explorer', text: 'File Explorer' },
  { icon: 'folder', text: 'USGS_NED_13_n39w0...' },
  { icon: 'rhino', text: 'Untitled - Rhinoceros ...' },
  { icon: 'arc', text: 'Untitled - ArcMap', active: true },
]
</script>

<template>
  <div class="app">
    <header class="titlebar">
      <svg class="i16" viewBox="0 0 16 16" v-html="icons.arc" />
      <span class="title">Untitled - ArcMap</span>
      <div class="winbtns">
        <button aria-label="Minimize"><svg viewBox="0 0 16 16" v-html="icons.minimize" /></button>
        <button aria-label="Restore"><svg viewBox="0 0 16 16" v-html="icons.restore" /></button>
        <button aria-label="Close"><svg viewBox="0 0 16 16" v-html="icons.close" /></button>
      </div>
    </header>

    <nav class="menubar">
      <button v-for="m in menus" :key="m">{{ m }}</button>
    </nav>

    <div class="toolrow">
      <div class="toolbar">
        <span class="grip" />
        <template v-for="(it, i) in standardLeft" :key="i">
          <button v-if="it.kind === 'btn'" class="tb" :aria-label="it.label"><svg viewBox="0 0 16 16" v-html="icons[it.icon]" /></button>
          <button v-else-if="it.kind === 'caret'" class="caret" :aria-label="it.label" />
          <span v-else class="sep" />
        </template>
        <div class="combo scale">
          <select v-model="scale" aria-label="Map scale"><option>1:1,250</option></select>
          <svg viewBox="0 0 16 16" v-html="icons.chevD" />
        </div>
        <template v-for="(it, i) in standardRight" :key="i">
          <button v-if="it.kind === 'btn'" class="tb" :aria-label="it.label"><svg viewBox="0 0 16 16" v-html="icons[it.icon]" /></button>
          <span v-else class="sep" />
        </template>
        <button class="overflow" aria-label="Toolbar options"><svg viewBox="0 0 10 10" v-html="icons.more" /></button>
      </div>
    </div>

    <div class="toolrow">
      <div class="toolbar">
        <span class="grip" />
        <template v-for="(it, i) in tools" :key="i">
          <button v-if="it.kind === 'btn'" class="tb" :class="{ active: it.active }" :aria-label="it.label"><svg viewBox="0 0 16 16" v-html="icons[it.icon]" /></button>
          <button v-else-if="it.kind === 'caret'" class="caret" :aria-label="it.label" />
          <span v-else class="sep" />
        </template>
        <button class="overflow" aria-label="Toolbar options"><svg viewBox="0 0 10 10" v-html="icons.more" /></button>
      </div>
    </div>

    <div class="toolrow drawing">
      <div class="toolbar">
        <span class="grip" />
        <button class="drawmenu">Drawing<i class="tri" /></button>
        <template v-for="(it, i) in drawLeft" :key="i">
          <button v-if="it.kind === 'btn'" class="tb" :aria-label="it.label"><svg viewBox="0 0 16 16" v-html="icons[it.icon]" /></button>
          <button v-else-if="it.kind === 'caret'" class="caret" :aria-label="it.label" />
          <span v-else class="sep" />
        </template>
        <div class="combo font">
          <svg class="lead" viewBox="0 0 16 16" v-html="icons.font" />
          <select v-model="fontName" aria-label="Font"><option>Arial</option></select>
          <svg viewBox="0 0 16 16" v-html="icons.chevD" />
        </div>
        <div class="combo size">
          <select v-model="fontSize" aria-label="Font size"><option>10</option></select>
          <svg viewBox="0 0 16 16" v-html="icons.chevD" />
        </div>
        <template v-for="(it, i) in drawRight" :key="i">
          <button v-if="it.kind === 'btn'" class="tb" :aria-label="it.label"><svg viewBox="0 0 16 16" v-html="icons[it.icon]" /></button>
          <button v-else-if="it.kind === 'caret'" class="caret" :class="{ wide: it.wide }" :aria-label="it.label" />
          <span v-else class="sep" />
        </template>
        <button class="overflow" aria-label="Toolbar options"><svg viewBox="0 0 10 10" v-html="icons.more" /></button>
      </div>
    </div>

    <main class="main">
      <aside class="toc">
        <div class="tochead">
          <span>Table Of Contents</span>
          <button aria-label="Auto hide"><svg viewBox="0 0 16 16" v-html="icons.pin" /></button>
          <button aria-label="Close panel"><svg viewBox="0 0 16 16" v-html="icons.cross" /></button>
        </div>
        <div class="toctools">
          <button class="tb active" aria-label="List by drawing order"><svg viewBox="0 0 16 16" v-html="icons.byOrder" /></button>
          <button class="tb" aria-label="List by source"><svg viewBox="0 0 16 16" v-html="icons.bySource" /></button>
          <button class="tb" aria-label="List by visibility"><svg viewBox="0 0 16 16" v-html="icons.byVis" /></button>
          <button class="tb" aria-label="List by selection"><svg viewBox="0 0 16 16" v-html="icons.bySel" /></button>
          <span class="sep" />
          <button class="tb" aria-label="Options"><svg viewBox="0 0 16 16" v-html="icons.opts" /></button>
        </div>
        <div class="tree">
          <div class="row">
            <button class="exp" aria-label="Collapse Layers" />
            <svg class="i16 lay" viewBox="0 0 16 16" v-html="icons.layers" /><b>Layers</b>
          </div>
          <div class="row l1">
            <button class="exp" aria-label="Collapse" />
            <input id="c1" v-model="shown.converted" type="checkbox" /><label for="c1">Converted_Graphics</label>
          </div>
          <div class="row"><span class="swatch" /></div>
          <div class="row l1">
            <button class="exp" aria-label="Collapse" />
            <input id="c2" v-model="shown.extract" type="checkbox" /><label for="c2" class="sel">Extract_grdn2</label>
          </div>
          <div class="row val">Value</div>
          <div class="ramp"><i /><div><span>High : 269.046</span><span>Low : 84.7141</span></div></div>
          <div class="row l1">
            <button class="exp" aria-label="Collapse" />
            <input id="c3" v-model="shown.grdn" type="checkbox" /><label for="c3">grdn39w079_13</label>
          </div>
          <div class="row val">Value</div>
          <div class="ramp"><i /><div><span>High : 1233.72</span><span>Low : 29.2695</span></div></div>
          <div class="row l1">
            <button class="exp" aria-label="Collapse" />
            <input id="c4" v-model="shown.basemap" type="checkbox" /><label for="c4">Basemap</label>
          </div>
          <div class="row l2">
            <button class="exp plus" aria-label="Expand" />
            <input id="c5" v-model="shown.topo" type="checkbox" /><label for="c5">World Topographic M</label>
          </div>
        </div>
        <div class="hscroll">
          <button aria-label="Scroll left"><svg viewBox="0 0 16 16" v-html="icons.chevL" /></button>
          <span class="track"><i class="thumb" /></span>
          <button aria-label="Scroll right"><svg viewBox="0 0 16 16" v-html="icons.chevR" /></button>
        </div>
      </aside>

      <section class="mapcol">
        <div class="maprow">
          <div class="viewport">
            <svg class="raster" :viewBox="`0 0 ${MAP_W} ${MAP_H}`" preserveAspectRatio="none">
              <g shape-rendering="crispEdges">
                <rect v-for="(c, i) in cells" :key="i" :x="c.x" :y="c.y" :width="c.w" :height="c.h" :fill="c.fill" />
                <path :d="fishnet" fill="none" stroke="#3c3b3e" stroke-width="1" />
              </g>
            </svg>

            <div class="inspector">
              <div class="ihead">
                <span>Pixel Inspector</span>
                <button aria-label="Maximize"><svg viewBox="0 0 16 16" v-html="icons.maxi" /></button>
                <button aria-label="Close inspector"><svg viewBox="0 0 16 16" v-html="icons.cross" /></button>
              </div>
              <div class="sheet">
                <table>
                  <thead>
                    <tr><th class="rh" /><th v-for="c in columns" :key="c">{{ c }}</th><th /></tr>
                  </thead>
                  <tbody>
                    <tr v-for="(r, ri) in rows" :key="ri">
                      <th class="rh">{{ ri }}</th>
                      <td v-for="(v, ci) in r" :key="ci" :class="{ picked: ri === 1 && ci === 1 }">{{ v }}</td>
                    </tr>
                  </tbody>
                </table>
              </div>
              <div class="tabs">
                <button class="on">Raw Values</button>
                <button>Rendered Values</button>
              </div>
              <div class="layerrow">
                <span class="igrip" />
                <label for="lyr">Layer:</label>
                <div class="lcombo">
                  <svg class="lead" viewBox="0 0 16 16" v-html="icons.raster" />
                  <select id="lyr" v-model="layer"><option>Extract_grdn2</option></select>
                  <span class="drop"><i class="tri" /></span>
                </div>
              </div>
            </div>
          </div>
          <div class="vscroll">
            <button aria-label="Scroll up"><svg viewBox="0 0 16 16" v-html="icons.chevU" /></button>
            <span class="vtrack"><i /></span>
            <button aria-label="Scroll down"><svg viewBox="0 0 16 16" v-html="icons.chevD" /></button>
          </div>
        </div>
        <div class="viewbar">
          <button class="on" aria-label="Data view"><svg viewBox="0 0 16 16" v-html="icons.dataView" /></button>
          <button aria-label="Layout view"><svg viewBox="0 0 16 16" v-html="icons.pageView" /></button>
          <span class="sep" />
          <button aria-label="Refresh"><svg viewBox="0 0 16 16" v-html="icons.refresh" /></button>
          <button aria-label="Pause drawing"><svg viewBox="0 0 16 16" v-html="icons.pause" /></button>
          <button aria-label="Pan left"><svg viewBox="0 0 16 16" v-html="icons.chevL" /></button>
          <span class="track"><i /></span>
          <button aria-label="Pan right"><svg viewBox="0 0 16 16" v-html="icons.chevR" /></button>
          <span class="corner" />
        </div>
      </section>

      <aside class="dock">
        <button><svg viewBox="0 0 16 16" v-html="icons.winCat" /><span>Catalog</span></button>
        <button><svg viewBox="0 0 16 16" v-html="icons.winSearch" /><span>Search</span></button>
      </aside>
    </main>

    <footer class="status"><span>-78.521&nbsp; 38.032 Decimal Degrees</span></footer>

    <div class="taskbar">
      <button class="sys" aria-label="Start"><svg viewBox="0 0 16 16" v-html="icons.windows" /></button>
      <button class="sys" aria-label="Search"><svg viewBox="0 0 16 16" v-html="icons.magnify" /></button>
      <button class="sys" aria-label="Task view"><svg viewBox="0 0 16 16" v-html="icons.taskView" /></button>
      <div class="tasks">
        <button v-for="t in tasks" :key="t.text" :class="{ active: t.active }">
          <svg viewBox="0 0 16 16" v-html="icons[t.icon]" /><span>{{ t.text }}</span>
        </button>
      </div>
      <div class="tray">
        <svg viewBox="0 0 16 16" class="s12" v-html="icons.up" />
        <svg viewBox="0 0 16 16" v-html="icons.net" />
        <svg viewBox="0 0 16 16" v-html="icons.vol" />
        <time>1:52 PM</time>
        <svg viewBox="0 0 16 16" class="note" v-html="icons.note" />
        <i class="peek" />
      </div>
    </div>
  </div>
</template>

<style>
body { margin: 0; overflow: hidden; }
</style>

<style scoped>
* { box-sizing: border-box; }
.app {
  height: 100vh; display: flex; flex-direction: column; overflow: hidden;
  font: 11px/14px Roboto, "Open Sans", sans-serif; color: #1c1a20;
  background: linear-gradient(90deg, #f0eef1 0, #f2f0f4 55%, #fdfcfe 78%);
}
button { font: inherit; color: inherit; background: none; border: 0; padding: 0; margin: 0; }
svg { display: block; flex: none; overflow: visible; }
.i16 { width: 16px; height: 16px; }

.titlebar { height: 21px; flex: none; background: #fefdfe; display: flex; align-items: center; padding: 0 4px 0 2px; }
.title { margin-left: 4px; }
.winbtns { margin-left: auto; display: flex; }
.winbtns button { width: 42px; height: 21px; display: flex; align-items: center; justify-content: center; }
.winbtns svg { width: 12px; height: 12px; }

.menubar { height: 24px; flex: none; display: flex; align-items: center; gap: 15px; padding: 2px 0 0 11px; }

.toolrow { height: 24px; flex: none; display: flex; }
.toolrow.drawing { height: 26px; padding-left: 265px; align-items: center; }
.toolbar { display: flex; align-items: center; padding-left: 4px; height: 24px; background: linear-gradient(#fbfafc, #f0eff2); }
.grip { width: 2px; height: 16px; margin-right: 4px; background: repeating-linear-gradient(#a9a8ac 0 2px, transparent 2px 4px); }
.tb { width: 20px; height: 22px; flex: none; display: flex; align-items: center; justify-content: center; }
.tb svg { width: 16px; height: 16px; }
.tb.active { border: 1px solid #3c8fcf; background: #cfe6f7; }
.sep { width: 1px; height: 16px; margin: 0 3px; flex: none; background: #c4c3c7; }
.caret, .tri { display: inline-flex; align-items: center; justify-content: center; }
.caret { width: 10px; height: 20px; flex: none; }
.caret.wide { width: 16px; }
.caret::after, .tri::after { content: ""; border: 3px solid transparent; border-top: 4px solid #111; border-bottom: 0; }
.overflow { width: 10px; height: 23px; align-self: flex-end; background: linear-gradient(#f0eff2, #a3a2a6); display: flex; align-items: flex-end; justify-content: center; }
.overflow svg { width: 10px; height: 10px; }
.combo { position: relative; display: flex; align-items: center; height: 20px; background: #fff; border: 1px solid #8a888d; padding-right: 4px; }
.combo select, .lcombo select { appearance: none; border: 0; background: none; font: inherit; color: inherit; padding: 0 0 0 3px; margin: 0; flex: 1; min-width: 0; height: 18px; outline: 0; }
.combo svg { width: 9px; height: 9px; }
.combo svg.lead { width: 16px; height: 16px; margin-left: 1px; }
.combo.scale { width: 141px; margin-left: 7px; }
.combo.font { width: 161px; }
.combo.size { width: 43px; }
.drawmenu { margin: 0 5px 0 2px; display: flex; align-items: center; gap: 2px; height: 20px; }

.main { flex: 1; min-height: 0; display: flex; }
.toc { width: 187px; flex: none; margin-right: 5px; display: flex; flex-direction: column; }
.tochead { height: 18px; flex: none; display: flex; align-items: center; padding: 0 3px 0 4px; gap: 5px; background: linear-gradient(90deg, #c8d4e2, #d8e3f0); }
.tochead span { margin-right: auto; }
.tochead svg { width: 10px; height: 10px; }
.toctools { height: 24px; flex: none; display: flex; align-items: center; padding-left: 4px; background: linear-gradient(#fbfafc, #edecef); }
.toctools .tb { height: 20px; }
.toctools .tb svg { width: 15px; height: 15px; }
.tree { flex: 1; min-height: 0; overflow: hidden; background: #fff; border: 1px solid #8b898e; border-bottom: 0; padding-top: 1px; }
.row { height: 17px; display: flex; align-items: center; padding-left: 7px; white-space: nowrap; line-height: 17px; }
.row.l1 { padding-left: 25px; }
.row.l2 { padding-left: 43px; }
.exp { width: 9px; height: 9px; flex: none; border: 1px solid #a3a2a6; background: linear-gradient(#5a6a9a, #5a6a9a) center / 5px 1px no-repeat, #f8f8fa; }
.exp.plus { background: linear-gradient(#444, #444) center / 5px 1px no-repeat, linear-gradient(#444, #444) center / 1px 5px no-repeat, #f8f8fa; }
.lay { margin: 0 4px 0 5px; }
.row input { appearance: none; width: 11px; height: 11px; flex: none; margin: 0 5px 0 7px; border: 1px solid #222; background: #fff; display: flex; justify-content: center; }
.row input:checked::before { content: ""; width: 4px; height: 7px; border: solid #000; border-width: 0 2px 2px 0; transform: rotate(42deg); }
.row label { padding: 0 2px; }
.row label.sel { background: #2f7cd0; color: #fff; }
.swatch { width: 14px; height: 10px; margin-left: 48px; border: 1px solid #777; background: #ffffbe; }
.row.val { padding-left: 77px; height: 16px; }
.ramp { height: 68px; display: flex; padding-left: 55px; }
.ramp i { width: 13px; height: 34px; background: linear-gradient(#e8e8e8, #777 55%, #080808); }
.ramp div { display: flex; flex-direction: column; justify-content: space-between; height: 48px; margin-left: 4px; }
.hscroll { height: 17px; flex: none; display: flex; align-items: center; background: #f0eff1; border: 1px solid #8b898e; border-top: 0; padding: 0 4px; }
.hscroll button { width: 11px; }
.hscroll svg { width: 11px; height: 11px; }
.track { flex: 1; height: 15px; }
.hscroll .track { padding: 0 18px 0 2px; }
.thumb { display: block; height: 15px; background: #cdccce; }

.mapcol { flex: 1; min-width: 0; display: flex; flex-direction: column; border-left: 1px solid #77757a; }
.maprow { flex: 1; min-height: 0; display: flex; border-top: 1px solid #77757a; }
.viewport { position: relative; flex: 1; min-width: 0; overflow: hidden; background: #b0afb2; }
.raster { width: 100%; height: 100%; }
.vscroll { width: 17px; flex: none; display: flex; flex-direction: column; background: #f0eff1; border-left: 2px solid #fbfafc; padding: 4px 0; }
.vscroll button { display: flex; justify-content: center; }
.vscroll svg { width: 11px; height: 11px; }
.vtrack { flex: 1; padding-top: 363px; }
.vtrack i { display: block; height: 15px; background: #cdccce; margin-left: 1px; }
.viewbar { height: 16px; flex: none; display: flex; align-items: center; background: #f0eff1; border-bottom: 1px solid #dddce0; }
.viewbar button { width: 16px; height: 15px; display: flex; align-items: center; justify-content: center; }
.viewbar button.on { background: #cfe3f4; }
.viewbar svg { width: 11px; height: 11px; }
.viewbar .sep { height: 13px; background: #77757a; }
.viewbar .track { display: flex; justify-content: center; padding-left: 14px; }
.viewbar .track i { width: 15px; height: 15px; background: #cdccce; }
.corner { width: 17px; }

.dock { width: 22px; flex: none; padding: 1px 0 0 3px; background: #fdfcfe; }
.dock button { width: 19px; height: 66px; padding-top: 4px; display: flex; flex-direction: column; align-items: center; gap: 3px; border: 1px solid #a5a4a8; border-right: 0; border-radius: 3px 0 0 3px; background: #f3f2f5; color: #5b595f; }
.dock button + button { height: 62px; padding-top: 2px; }
.dock svg { width: 16px; height: 16px; }
.dock span { writing-mode: vertical-rl; font-size: 12px; line-height: 14px; }

.inspector { position: absolute; left: 5px; top: 47px; width: 628px; background: #f0eff2; border: 1px solid #f8f7fa; border-right: 1px solid #222; border-bottom: 2px solid #333; padding: 2px 2px 2px 1px; }
.ihead { height: 18px; display: flex; align-items: center; gap: 6px; padding: 0 4px; background: linear-gradient(90deg, #c6d1df, #d9e4f1); }
.ihead span { margin-right: auto; }
.ihead svg { width: 10px; height: 10px; }
.sheet { margin: 4px 4px 0 3px; background: #fff; border-right: 2px solid #fff; padding: 2px 0 5px 1px; overflow: hidden; height: 457px; }
table { table-layout: fixed; width: 673px; border-collapse: separate; border-spacing: 0; font: 10px/13px "DejaVu Sans Condensed", "DejaVu Sans", sans-serif; border-top: 1px solid #a9a8ac; border-left: 1px solid #a9a8ac; }
th, td { height: 14px; padding: 0 0 0 4px; border-right: 1px solid #a9a8ac; border-bottom: 1px solid #a9a8ac; text-align: left; white-space: nowrap; width: 107px; }
thead th { height: 15px; }
th { background: #f1f0f3; font-weight: normal; text-align: center; padding: 0; }
th.rh { width: 30px; }
td.picked { background: #f0eff2; border-color: #88868b; }
.tabs { display: flex; align-items: flex-start; height: 20px; margin-left: 1px; font-size: 10px; }
.tabs button { height: 17px; padding: 0 4px; border-right: 1px solid #dcdbdf; }
.tabs button.on { height: 20px; padding: 2px 8px 0 6px; background: #fff; }
.layerrow { display: flex; align-items: center; height: 23px; padding-left: 2px; }
.igrip { width: 2px; height: 20px; margin-right: 4px; background: repeating-linear-gradient(#8f8e92 0 2px, transparent 2px 4px); }
.layerrow label { width: 46px; height: 16px; }
.lcombo { width: 275px; height: 20px; display: flex; align-items: center; background: #fff; border: 1px solid #77757a; border-right-color: #ddd; border-bottom-color: #ddd; }
.lcombo .lead { width: 16px; height: 16px; margin-left: 1px; }
.drop { width: 15px; height: 17px; background: #f0eff2; border: 1px solid #ddd; border-right-color: #77757a; border-bottom-color: #77757a; display: flex; align-items: center; justify-content: center; }

.status { height: 20px; flex: none; display: flex; align-items: center; justify-content: flex-end; padding: 2px 79px 0 0; background: #f0eff1; border-top: 1px solid #fbfafc; }

.taskbar { height: 28px; flex: none; display: flex; background: #000; color: #fff; }
.sys { width: 34px; display: flex; align-items: center; justify-content: center; }
.sys svg { width: 15px; height: 15px; }
.tasks { display: flex; gap: 8px; margin-left: 6px; }
.tasks button { width: 143px; height: 28px; display: flex; align-items: center; gap: 5px; padding: 2px 0 0 3px; border-bottom: 2px solid #86b9e6; white-space: nowrap; }
.tasks button.active { width: 150px; margin-left: -2px; padding-left: 8px; background: #333336; }
.tasks svg { width: 14px; height: 14px; }
.tray { margin-left: auto; display: flex; align-items: center; gap: 8px; }
.tray svg { width: 15px; height: 15px; }
.tray time { margin-left: 4px; }
.tray svg.s12 { width: 12px; height: 12px; }
.tray svg.note { margin-left: 12px; }
.peek { width: 1px; height: 28px; background: #555; margin: 0 4px 0 10px; }
</style>
